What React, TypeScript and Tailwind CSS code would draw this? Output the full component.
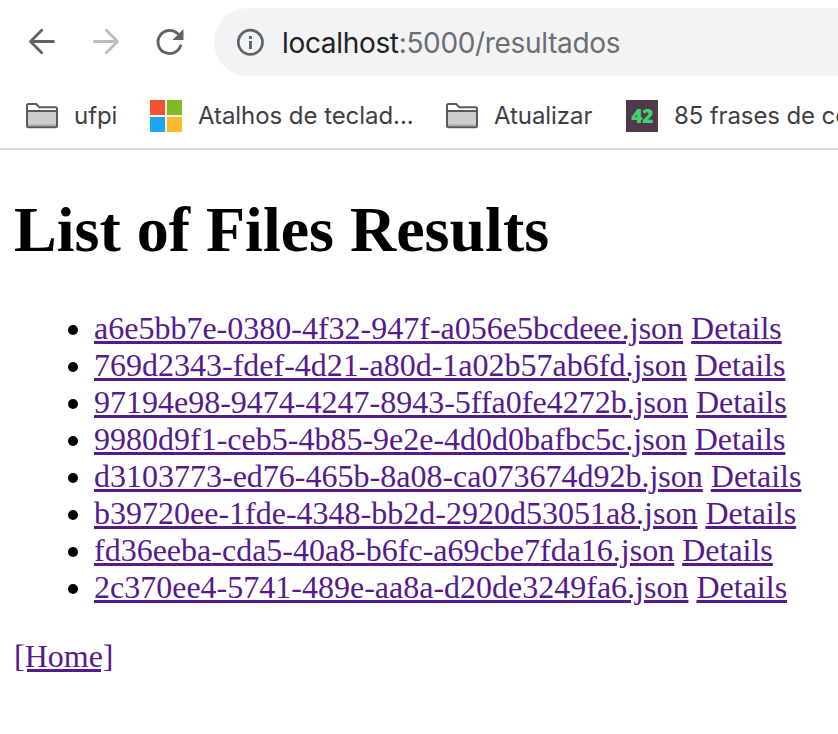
const files = [
  'a6e5bb7e-0380-4f32-947f-a056e5bcdeee.json',
  '769d2343-fdef-4d21-a80d-1a02b57ab6fd.json',
  '97194e98-9474-4247-8943-5ffa0fe4272b.json',
  '9980d9f1-ceb5-4b85-9e2e-4d0d0bafbc5c.json',
  'd3103773-ed76-465b-8a08-ca073674d92b.json',
  'b39720ee-1fde-4348-bb2d-2920d53051a8.json',
  'fd36eeba-cda5-40a8-b6fc-a69cbe7fda16.json',
  '2c370ee4-5741-489e-aa8a-d20de3249fa6.json',
];

const linkClass = 'text-[#551a8b] underline decoration-[3px] underline-offset-[2px]';

function ArrowIcon({ className }: { className: string }) {
  return (
    <svg className={className} width="32" height="32" viewBox="0 0 32 32" fill="none" stroke="currentColor" strokeWidth="2.8" strokeLinecap="round" strokeLinejoin="round">
      <path d="M27.5 15.5H5M15.7 4.3L4.5 15.5L15.7 26.7" />
    </svg>
  );
}

function ForwardIcon() {
  return (
    <svg className="ml-8 text-[#babcbe]" width="32" height="32" viewBox="0 0 32 32" fill="none" stroke="currentColor" strokeWidth="2.8" strokeLinecap="round" strokeLinejoin="round">
      <path d="M4.5 15.5H27M16.3 4.3L27.5 15.5L16.3 26.7" />
    </svg>
  );
}

function ReloadIcon() {
  return (
    <svg className="ml-8 text-[#5f6368]" width="32" height="32" viewBox="0 0 32 32">
      <path d="M26.6 19.8A11.6 11.6 0 1 1 23.6 7.6" fill="none" stroke="currentColor" strokeWidth="2.8" strokeLinecap="round" />
      <path d="M29.5 3V14H18.5Z" fill="currentColor" />
    </svg>
  );
}

function InfoIcon() {
  return (
    <svg className="shrink-0 text-[#5f6368]" width="28" height="28" viewBox="0 0 28 28">
      <circle cx="14.4" cy="14.3" r="12.1" fill="none" stroke="currentColor" strokeWidth="2.7" />
      <path d="M13 8h2.9v2.9H13zM13 13h2.9v8H13z" fill="currentColor" />
    </svg>
  );
}

function FolderIcon() {
  return (
    <svg className="shrink-0" width="32" height="26" viewBox="0 0 32 26">
      <path d="M1 8H31V24H1Z" fill="#cdcdcd" />
      <path d="M2 21.3H30V23.3H2Z" fill="#b0b0b0" />
      <path d="M1 8H31M1 2.5Q1 1 2.5 1H10.2L13.3 4.2H29.5Q31 4.2 31 5.7V22.5Q31 24.2 29.5 24.2H2.5Q1 24.2 1 22.5Z" fill="none" stroke="#5a5a5a" strokeWidth="2" />
    </svg>
  );
}

function Windows() {
  return (
    <div className="grid size-8 shrink-0 grid-cols-2 gap-[2px] bg-[#f3efe6]">
      <span className="bg-[#f25230]" />
      <span className="bg-[#80b922]" />
      <span className="bg-[#1da5ec]" />
      <span className="bg-[#ffb92d]" />
    </div>
  );
}

export default function App() {
  return (
    <div className="h-[734px] w-[838px] overflow-hidden bg-white">
      <header className="border-b-2 border-[#dadada] font-['Inter',sans-serif]">
        <div className="flex h-[84px] items-center pl-[26px]">
          <ArrowIcon className="text-[#5f6368]" />
          <ForwardIcon />
          <ReloadIcon />
          <div className="ml-7 flex h-[68px] flex-1 items-center rounded-l-full bg-[#f1f3f4] pl-[22px]">
            <InfoIcon />
            <span className="ml-[18px] pt-px text-[28px] tracking-[-0.33px] whitespace-nowrap text-[#6b6d70]">
              <span className="text-[#202124]">localhost</span>:5000/resultados
            </span>
          </div>
        </div>
        <nav className="flex h-16 items-center pl-[26px] text-2xl tracking-[-0.06px] whitespace-nowrap text-[#3c4043]">
          <FolderIcon />
          <span className="ml-4 w-[76px] shrink-0">ufpi</span>
          <Windows />
          <span className="ml-4 w-[248px] shrink-0">Atalhos de teclad...</span>
          <FolderIcon />
          <span className="ml-4 w-[132px] shrink-0">Atualizar</span>
          <span className="flex size-8 shrink-0 items-center justify-center bg-[#50384f] pb-px font-['Open_Sans',sans-serif] text-[19.5px] font-extrabold tracking-[-0.8px] text-[#41d46b]">42</span>
          <span className="ml-4 tracking-[-0.12px]">85 frases de co</span>
        </nav>
      </header>
      <main className="px-[14px] pt-[43px] font-['Liberation_Serif',serif] text-[32px] leading-[37px] text-black">
        <h1 className="text-[64px] leading-[74px] font-bold">List of Files Results</h1>
        <ul className="mt-[43px] pl-[54px]">
          {files.map((file) => (
            <li key={file} className="flex items-center whitespace-nowrap">
              <span className="mt-[3px] mr-4 size-[10px] rounded-full bg-black" />
              <span>
                <a className={linkClass}>{file}</a> <a className={linkClass}>Details</a>
              </span>
            </li>
          ))}
        </ul>
        <p className="mt-8"><a className={linkClass}>[Home]</a></p>
      </main>
    </div>
  );
}
